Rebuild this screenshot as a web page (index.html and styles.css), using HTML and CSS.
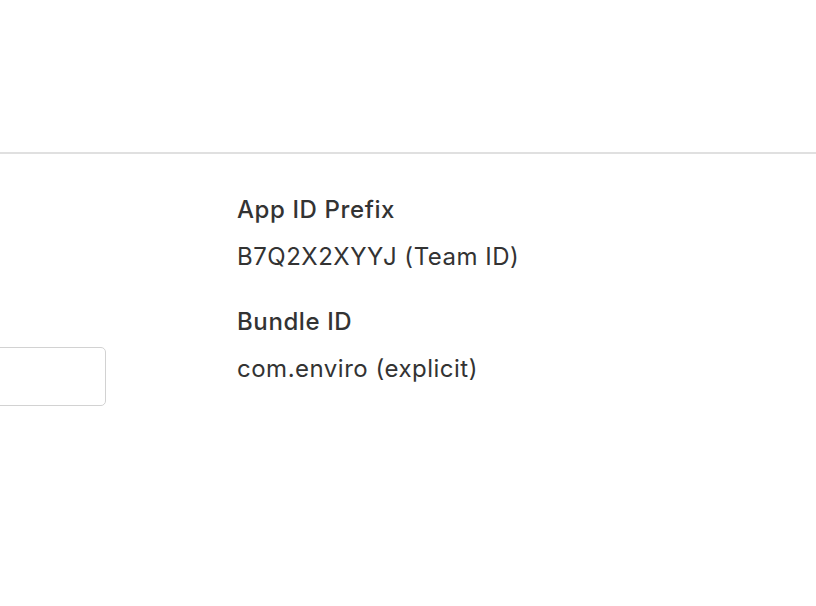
FILE: index.html
```html
<!DOCTYPE html>
<html lang="en">
<head>
<meta charset="utf-8">
<title>Identifier</title>
<link rel="stylesheet" href="styles.css">
</head>
<body>
<header class="topbar"></header>
<main class="content">
  <div class="field-col">
    <input class="text-input" type="text" aria-label="Description">
  </div>
  <dl class="details">
    <dt class="label">App ID Prefix</dt>
    <dd class="value">B7Q2X2XYYJ (Team ID)</dd>
    <dt class="label label-next">Bundle ID</dt>
    <dd class="value">com.enviro (explicit)</dd>
  </dl>
</main>
</body>
</html>
```
FILE: styles.css
```css
html, body {
  margin: 0;
  padding: 0;
  background: #ffffff;
}
body {
  font-family: Inter, "Helvetica Neue", "Liberation Sans", Arial, sans-serif;
  color: #333333;
  width: 816px;
  height: 606px;
  overflow: hidden;
}
.topbar {
  height: 152px;
  border-bottom: 2px solid #e0e0e0;
}
.content {
  display: flex;
  align-items: flex-start;
}
.field-col {
  width: 106px;
  flex: none;
  padding-top: 193px;
  overflow: hidden;
}
.text-input {
  display: block;
  box-sizing: border-box;
  width: 300px;
  height: 59px;
  margin-left: -194px;
  border: 1px solid #d2d2d2;
  border-radius: 5px;
  background: #fff;
  outline: none;
}
.details {
  margin: 0 0 0 131px;
  padding-top: 42px;
  font-size: 24px;
  line-height: 28px;
  letter-spacing: 0.5px;
}
.label {
  margin: 0;
  font-weight: 500;
  letter-spacing: 0.6px;
  color: #333333;
}
.label-next {
  margin-top: 37px;
}
.value {
  margin: 19px 0 0 0;
  font-weight: 400;
  color: #333333;
}
```
